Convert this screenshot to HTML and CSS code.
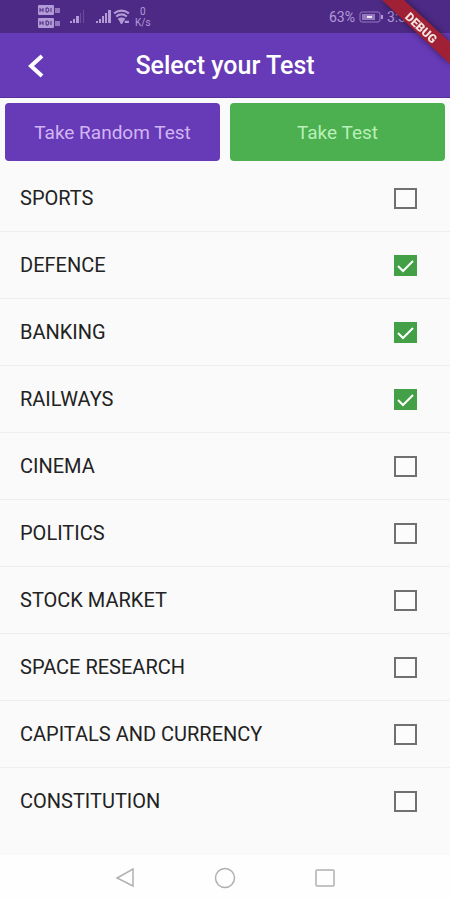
FILE: index.html
```html
<!DOCTYPE html>
<html lang="en">
<head>
<meta charset="utf-8">
<meta name="viewport" content="width=device-width, initial-scale=1">
<title>Select your Test</title>
<link rel="stylesheet" href="styles.css">
</head>
<body>
<div class="screen">
  <div class="status">
    <svg class="sim" viewBox="0 0 24 24" aria-hidden="true">
      <rect x="0" y="0" width="16" height="10" rx="1"/><rect x="0" y="13" width="16" height="10" rx="1"/>
      <path d="M17 3h5v5h-5zM17 16h5v5h-5z" opacity=".7"/>
      <path class="cut" d="M2 3v4M5 3v4M2 5h3M8 3v4h2l1-2-1-2zM13 3v4M2 16v4M5 16v4M2 18h3M8 16v4h2l1-2-1-2zM13 16v4"/>
    </svg>
    <svg class="signal" viewBox="0 0 16 14" aria-hidden="true"><path d="M0 11h2v2H0zM3 9h2v4H3zM6 6h3v7H6z"/><path d="M10 3h1v10h-1zM13 0h1v13h-1z" opacity=".3"/></svg>
    <svg class="signal full" viewBox="0 0 16 14" aria-hidden="true"><path d="M0 11h2v2H0zM3 9h2v4H3zM6 6h2v7H6zM9 3h2v10H9zM12 0h3v13h-3z"/></svg>
    <svg class="wifi" viewBox="0 0 16 14" aria-hidden="true"><path d="M1 4q7-5 14 0M3 7q5-4 10 0M5 10q3-2 6 0"/><path d="M7 11l1 2 1-2zM12 11v2M14 11v2"/></svg>
    <span class="rate"><span>0</span><span>K/s</span></span>
    <span class="battery-text">63%</span>
    <svg class="battery" viewBox="0 0 24 12" aria-hidden="true"><rect class="shell" x="1" y="1" width="20" height="10" rx="2"/><rect class="charge" x="3" y="3" width="13" height="6"/><path d="M22 4h2v4h-2z"/><path class="bolt" d="M8 6h5M10 5v2"/></svg>
    <span class="time">3:30</span>
  </div>
  <header class="appbar">
    <button class="back" type="button" aria-label="Back"><svg viewBox="0 0 20 26" aria-hidden="true"><path d="M16 3L5 13l11 10"/></svg></button>
    <h1>Select your Test</h1>
  </header>
  <main>
    <div class="actions">
      <button class="action random" type="button">Take Random Test</button>
      <button class="action take" type="button">Take Test</button>
    </div>
    <div class="topics">
      <label class="topic"><span>SPORTS</span><input type="checkbox"></label>
      <label class="topic"><span>DEFENCE</span><input type="checkbox" checked></label>
      <label class="topic"><span>BANKING</span><input type="checkbox" checked></label>
      <label class="topic"><span>RAILWAYS</span><input type="checkbox" checked></label>
      <label class="topic"><span>CINEMA</span><input type="checkbox"></label>
      <label class="topic"><span>POLITICS</span><input type="checkbox"></label>
      <label class="topic"><span>STOCK MARKET</span><input type="checkbox"></label>
      <label class="topic"><span>SPACE RESEARCH</span><input type="checkbox"></label>
      <label class="topic"><span>CAPITALS AND CURRENCY</span><input type="checkbox"></label>
      <label class="topic"><span>CONSTITUTION</span><input type="checkbox"></label>
    </div>
  </main>
  <nav class="system">
    <button type="button" aria-label="System back"><svg viewBox="0 0 22 22" aria-hidden="true"><path d="M19 2v17L3 11z"/></svg></button>
    <button type="button" aria-label="Home"><svg viewBox="0 0 22 22" aria-hidden="true"><circle cx="11" cy="11" r="9.5"/></svg></button>
    <button type="button" aria-label="Recent apps"><svg viewBox="0 0 22 22" aria-hidden="true"><rect x="2" y="3" width="18" height="16" rx="1"/></svg></button>
  </nav>
  <svg class="banner" viewBox="0 0 72 68"><path d="M4 0h22l46 42v22z"/><text x="0" y="4" transform="translate(43 28) rotate(43)">DEBUG</text></svg>
</div>
</body>
</html>
```
FILE: styles.css
```css
* { box-sizing: border-box; }
body { margin: 0; font-family: Roboto, "Liberation Sans", sans-serif; background: #fafafa; color: #222; }
button { border: 0; padding: 0; background: none; font: inherit; color: inherit; cursor: pointer; }
svg { display: block; }
.screen { position: relative; min-height: 100vh; display: flex; flex-direction: column; overflow: hidden; }
.status { height: 33px; padding: 0 36px 0 38px; display: flex; align-items: center; background: #4d2a86; color: #b29ad6; }
.status svg { fill: #b29ad6; flex: none; }
.sim { width: 24px; height: 24px; }
.status .cut { fill: none; stroke: #4d2a86; }
.signal { width: 16px; height: 14px; margin-left: 8px; }
.signal.full { margin-left: 10px; }
.status .wifi { width: 17px; height: 15px; margin-left: 1px; fill: none; stroke: #b29ad6; stroke-width: 2; }
.rate { display: flex; flex-direction: column; align-items: center; margin-left: 5px; font-size: 10px; line-height: 11px; }
.battery-text { margin-left: auto; font-size: 14px; }
.battery { width: 24px; height: 12px; margin: 0 4px; }
.status .shell { fill: none; stroke: #9479bd; }
.status .charge { fill: #9479bd; }
.status .bolt { stroke: #f0e8fa; stroke-width: 2; }
.time { font-size: 14px; }
.appbar { height: 65px; padding-top: 2px; display: grid; grid-template-columns: 72px 1fr 72px; align-items: center; background: #673ab7; color: #fff; border-bottom: 1px solid #5730a0; }
.back { height: 48px; display: flex; align-items: center; justify-content: center; }
.back svg { width: 20px; height: 26px; fill: none; stroke: #fff; stroke-width: 4; }
h1 { margin: 0; font-size: 25px; line-height: 32px; font-weight: 500; text-align: center; }
main { flex: 1; }
.actions { display: grid; grid-template-columns: 1fr 1fr; gap: 10px; padding: 5px 5px 4px; }
.action { height: 58px; border-radius: 4px; font-size: 19px; }
.random { background: #673ab7; color: #d1b5f5; }
.take { background: #4caf50; color: #b9efb8; }
.topic { height: 67px; padding: 0 33px 0 20px; display: flex; align-items: center; justify-content: space-between; font-size: 20px; border-bottom: 1px solid #eee; cursor: pointer; }
.topic:last-child { border-bottom-color: transparent; }
.topic input { appearance: none; margin: 0; width: 23px; height: 21px; border: 2px solid #707070; background: #fcfcfc; }
.topic input:checked { border-color: #43a047; background: #43a047 url("data:image/svg+xml,%3Csvg xmlns='http://www.w3.org/2000/svg' viewBox='0 0 19 17'%3E%3Cpath d='M2 9l5 5L17 4' fill='none' stroke='white' stroke-width='2'/%3E%3C/svg%3E") center / 19px 17px no-repeat; }
.system { height: 45px; padding: 0 75px; display: grid; grid-template-columns: repeat(3, 1fr); background: #fefefe; }
.system button { display: flex; align-items: center; justify-content: center; }
.system svg { width: 22px; height: 22px; fill: none; stroke: #b0b0b0; stroke-width: 1.5; }
.banner { position: absolute; top: 0; right: 0; width: 72px; height: 68px; fill: #a02035; filter: drop-shadow(0 0 3px rgba(0, 0, 0, .5)); }
.banner text { fill: #f5e4e0; font-size: 12px; font-weight: 900; text-anchor: middle; }
```
